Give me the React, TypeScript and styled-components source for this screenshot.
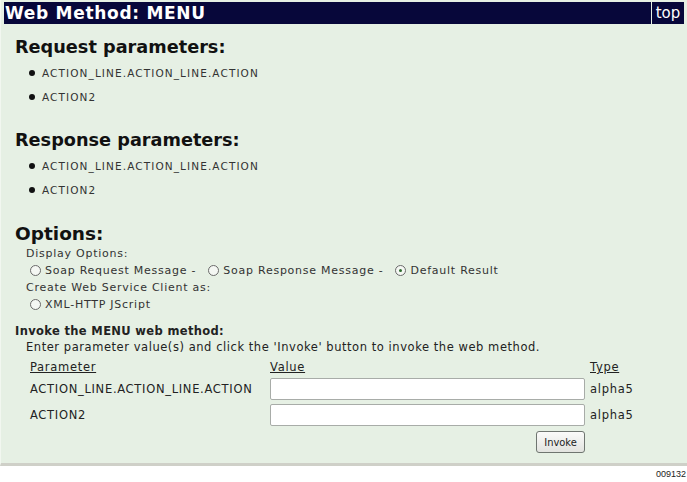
import React from 'react';
import styled, { createGlobalStyle } from 'styled-components';

const GlobalStyle = createGlobalStyle`
  html, body {
    margin: 0;
    padding: 0;
    background: #ffffff;
  }
`;

const Page = styled.div`
  width: 687px;
  height: 482px;
  display: flex;
  flex-direction: column;
  font-family: "DejaVu Sans", Verdana, sans-serif;
`;

const Panel = styled.div`
  height: 466px;
  box-sizing: border-box;
  background: #e6f0e4;
  border-left: 1px solid #f2f7f0;
  border-bottom: 3px solid #cfd0c8;
  padding: 2px 3px 0 3px;
`;

const HeaderRow = styled.div`
  display: flex;
  gap: 1px;
  height: 22px;
`;

const HeaderTitle = styled.div`
  flex: 1;
  background: #07073a;
  color: #ffffff;
  font-weight: bold;
  font-size: 17px;
  line-height: 22px;
  padding-left: 1px;
  letter-spacing: 0.7px;
`;

const TopLink = styled.div`
  width: 32px;
  background: #07073a;
  color: #ffffff;
  font-size: 15px;
  line-height: 22px;
  text-align: center;
`;

const Section = styled.div`
  padding-left: 11px;
`;

const Heading = styled.h2<{ $size?: number; $top: number }>`
  margin: ${p => p.$top}px 0 0 0;
  font-size: ${p => p.$size ?? 17.7}px;
  line-height: 22px;
  font-weight: bold;
  color: #111;
`;

const BulletList = styled.ul`
  list-style: none;
  margin: 3px 0 0 0;
  padding: 0 0 0 14px;
`;

const BulletItem = styled.li`
  display: flex;
  align-items: center;
  height: 24px;
  font-size: 10.5px;
  letter-spacing: 1.1px;
  color: #333;
  &::before {
    content: '';
    width: 6px;
    height: 6px;
    border-radius: 50%;
    background: #111;
    margin-right: 7px;
  }
`;

const OptionsBody = styled.div`
  padding-left: 22px;
  font-size: 11px;
  letter-spacing: 0.75px;
  color: #333;
`;

const OptLine = styled.div`
  height: 17px;
  line-height: 17px;
  display: flex;
  align-items: center;
`;

const RadioLabel = styled.span`
  display: inline-flex;
  align-items: center;
  margin-left: 12px;
  &:first-child {
    margin-left: 4px;
  }
`;

const RadioCircle = styled.span<{ $checked?: boolean }>`
  width: 11px;
  height: 11px;
  box-sizing: border-box;
  border: 1px solid #6a6a6a;
  border-radius: 50%;
  margin-right: 4px;
  display: inline-flex;
  align-items: center;
  justify-content: center;
  background: #f4f7f3;
  &::after {
    content: '';
    width: 3px;
    height: 3px;
    border-radius: 50%;
    background: ${p => (p.$checked ? '#2d6b2d' : 'transparent')};
  }
`;

const Invoke = styled.div`
  margin-top: 10px;
  color: #222;
  font-size: 11.5px;
`;

const InvokeTitle = styled.div`
  font-weight: bold;
  letter-spacing: 0.35px;
  line-height: 16px;
`;

const InvokeNote = styled.div`
  padding-left: 11px;
  letter-spacing: 0.55px;
  line-height: 16px;
`;

const ParamGrid = styled.div`
  display: grid;
  grid-template-columns: 240px 320px 80px;
  padding-left: 26px;
  margin-top: 4px;
  align-items: center;
  color: #222;
  font-size: 11.5px;
  letter-spacing: 0.7px;
`;

const ColHead = styled.div`
  text-decoration: underline;
  height: 17px;
  line-height: 17px;
`;

const Cell = styled.div`
  height: 26px;
  display: flex;
  align-items: center;
  white-space: nowrap;
`;

const TextBox = styled.input`
  width: 315px;
  height: 22px;
  box-sizing: border-box;
  border: 1px solid #a8aca8;
  border-radius: 2px;
  background: #ffffff;
  padding: 0 3px;
`;

const ButtonCell = styled.div`
  grid-column: 2;
  display: flex;
  justify-content: flex-end;
  padding-right: 5px;
  margin-top: 3px;
`;

const InvokeButton = styled.button`
  width: 49px;
  height: 22px;
  font-family: "DejaVu Sans Condensed", "DejaVu Sans", sans-serif;
  font-size: 11px;
  color: #222;
  background: linear-gradient(#fbfbfa, #e2e3df);
  border: 1px solid #6f7570;
  border-radius: 3px;
  padding: 0;
`;

const Footer = styled.div`
  flex: 1;
  display: flex;
  justify-content: flex-end;
  align-items: center;
  padding-right: 1px;
  font-family: "Liberation Sans", Arial, sans-serif;
  font-size: 9px;
  color: #222;
`;

const params = ['ACTION_LINE.ACTION_LINE.ACTION', 'ACTION2'];
const rows = [
  { name: 'ACTION_LINE.ACTION_LINE.ACTION', type: 'alpha5' },
  { name: 'ACTION2', type: 'alpha5' },
];

const App: React.FC = () => {
  return (
    <Page>
      <GlobalStyle />
      <Panel>
        <HeaderRow>
          <HeaderTitle>Web Method: MENU</HeaderTitle>
          <TopLink>top</TopLink>
        </HeaderRow>

        <Section>
          <Heading $top={12}>Request parameters:</Heading>
          <BulletList>
            {params.map(p => (
              <BulletItem key={p}>{p}</BulletItem>
            ))}
          </BulletList>

          <Heading $top={20}>Response parameters:</Heading>
          <BulletList>
            {params.map(p => (
              <BulletItem key={p}>{p}</BulletItem>
            ))}
          </BulletList>

          <Heading $top={21} $size={18.5}>Options:</Heading>
        </Section>

        <OptionsBody>
          <OptLine>Display Options:</OptLine>
          <OptLine>
            <RadioLabel><RadioCircle />Soap Request Message -</RadioLabel>
            <RadioLabel><RadioCircle />Soap Response Message -</RadioLabel>
            <RadioLabel><RadioCircle $checked />Default Result</RadioLabel>
          </OptLine>
          <OptLine>Create Web Service Client as:</OptLine>
          <OptLine>
            <RadioLabel><RadioCircle />XML-HTTP JScript</RadioLabel>
          </OptLine>
        </OptionsBody>

        <Section>
          <Invoke>
            <InvokeTitle>Invoke the MENU web method:</InvokeTitle>
            <InvokeNote>
              Enter parameter value(s) and click the 'Invoke' button to invoke the web method.
            </InvokeNote>
          </Invoke>
        </Section>

        <ParamGrid>
          <ColHead>Parameter</ColHead>
          <ColHead>Value</ColHead>
          <ColHead>Type</ColHead>
          {rows.map(r => (
            <React.Fragment key={r.name}>
              <Cell>{r.name}</Cell>
              <Cell><TextBox /></Cell>
              <Cell>{r.type}</Cell>
            </React.Fragment>
          ))}
          <ButtonCell>
            <InvokeButton>Invoke</InvokeButton>
          </ButtonCell>
        </ParamGrid>
      </Panel>
      <Footer>009132</Footer>
    </Page>
  );
};

export default App;
